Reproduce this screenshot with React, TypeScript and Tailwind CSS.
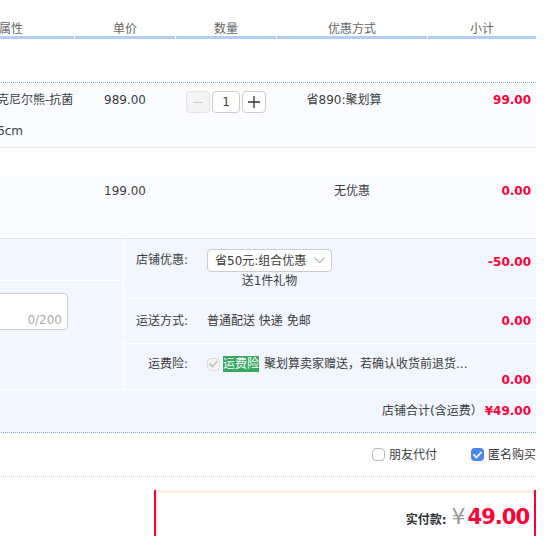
const COLS = 'grid grid-cols-[126px_100px_100px_150px_108px] gap-x-px'
const HEAD = ['属性', '单价', '数量', '优惠方式', '小计']

function CheckMark({ color }: { color: string }) {
  return (
    <svg width="9" height="8" viewBox="0 0 9 8" fill="none">
      <polyline points="1,4 3.5,6.5 8,1.5" stroke={color} strokeWidth="1.8" strokeLinecap="round" strokeLinejoin="round" />
    </svg>
  )
}

export default function App() {
  return (
    <div className="h-[536px] w-[557px] overflow-hidden bg-white text-[12px] leading-[18px] text-[#3c3c3c] font-['DejaVu_Sans','Noto_Sans_CJK_SC',sans-serif]">
      <div className="ml-[-52px] w-[588px]">
        {/* 表头 */}
        <div className={COLS}>
          {HEAD.map((h) => (
            <div key={h} className="h-[39px] border-b-[3px] border-[#b0cefa] pt-[21px] text-center leading-[16px] text-[#666]">
              {h}
            </div>
          ))}
        </div>

        <div className="h-[43px]" />

        {/* 商品 1 */}
        <div className={`${COLS} h-[66px] border-y border-dotted border-t-[#7fb0f2] border-b-[#cfcfcf] bg-[#fbfcff]`}>
          <div className="whitespace-nowrap pl-[49px] pt-[8px]">
            <p>克尼尔熊-抗菌</p>
            <p className="mt-[13px]">6cm</p>
          </div>
          <div className="pt-[8px] text-center">989.00</div>
          <div className="flex justify-center gap-[2px] pt-[8px]">
            <div className="flex h-[22px] w-[24px] items-center justify-center rounded-sm border border-[#e3e3e3] bg-[#f5f5f5]">
              <span className="h-px w-[10px] bg-[#cfcfcf]" />
            </div>
            <div className="flex h-[22px] w-[28px] items-center justify-center rounded-sm border border-[#ccc] bg-white">1</div>
            <div className="relative flex h-[22px] w-[24px] items-center justify-center rounded-sm border border-[#ccc] bg-white">
              <svg width="12" height="12" viewBox="0 0 12 12">
                <path d="M6 0v12M0 6h12" stroke="#333" strokeWidth="1.3" />
              </svg>
            </div>
          </div>
          <div className="pr-[16px] pt-[8px] text-center">省890:聚划算</div>
          <div className="pr-[5px] pt-[8px] text-right font-bold text-[#ff0036]">99.00</div>
        </div>

        {/* 商品 2 */}
        <div className={`${COLS} mt-[27px] h-[64px] border-b border-dotted border-[#cfcfcf] bg-[#fbfcff]`}>
          <div />
          <div className="pt-[7px] text-center">199.00</div>
          <div />
          <div className="pt-[7px] text-center">无优惠</div>
          <div className="pr-[5px] pt-[7px] text-right font-bold text-[#ff0036]">0.00</div>
        </div>

        {/* 店铺 */}
        <div className="border-b border-dotted border-[#7fb0f2] bg-[#f1f6ff]">
          <div className="flex border-b border-white">
            <div className="w-[176px] border-r border-white">
              <div className="h-[42px] border-b border-white" />
              <div className="pt-[12px]">
                <div className="flex h-[37px] w-[120px] items-end justify-end rounded-sm border border-[#ccc] bg-white pb-px pr-[5px] leading-[16px] text-[#aaa]">
                  0/200
                </div>
              </div>
            </div>
            <div className="flex-1">
              <div className="flex h-[60px] items-start border-b border-white pt-[10px]">
                <div className="w-[64px] text-right leading-[23px]">店铺优惠:</div>
                <div className="ml-[19px] flex flex-col items-center">
                  <div className="flex h-[23px] w-[125px] items-center justify-between rounded-sm border border-[#ccc] bg-white pl-[7px] pr-[6px]">
                    <span>省50元:组合优惠</span>
                    <svg width="11" height="7" viewBox="0 0 11 7" fill="none">
                      <polyline points="0.5,0.5 5.5,6 10.5,0.5" stroke="#999" strokeWidth="1" />
                    </svg>
                  </div>
                  <div className="mt-px leading-[16px]">送1件礼物</div>
                </div>
                <div className="ml-auto pr-[5px] pt-[2px] leading-[23px] font-bold text-[#ff0036]">-50.00</div>
              </div>
              <div className="flex h-[45px] items-center border-b border-white">
                <div className="w-[64px] text-right">运送方式:</div>
                <div className="ml-[19px]">普通配送 快递 免邮</div>
                <div className="ml-auto pr-[5px] font-bold text-[#ff0036]">0.00</div>
              </div>
              <div className="h-[45px] pt-[12px] leading-[16px]">
                <div className="flex h-[16px] items-center">
                  <div className="w-[64px] text-right">运费险:</div>
                  <div className="ml-[19px] flex h-[13px] w-[13px] items-center justify-center rounded-sm border border-[#dcdcdc] bg-[#f4f4f4]">
                    <CheckMark color="#c8c8c8" />
                  </div>
                  <span className="ml-[3px] h-[16px] bg-[#35a862] text-white">运费险</span>
                  <span className="ml-[5px] whitespace-nowrap">聚划算卖家赠送，若确认收货前退货...</span>
                </div>
                <div className="pr-[5px] text-right font-bold text-[#ff0036]">0.00</div>
              </div>
            </div>
          </div>
          <div className="flex h-[42px] items-center justify-end pr-[5px]">
            <span>店铺合计(含运费）</span>
            <span className="ml-[2px] font-bold text-[#ff0036]">¥49.00</span>
          </div>
        </div>

        {/* 选项 */}
        <div className="flex h-[44px] items-center justify-end border-b border-dotted border-[#cfcfcf]">
          <div className="flex items-center">
            <span className="h-[13px] w-[13px] rounded-sm border border-[#b9b9b9] bg-white" />
            <span className="ml-[4px]">朋友代付</span>
          </div>
          <div className="ml-[34px] flex items-center">
            <span className="flex h-[13px] w-[13px] items-center justify-center rounded-sm bg-[#4a86f2]">
              <CheckMark color="#fff" />
            </span>
            <span className="ml-[4px]">匿名购买</span>
          </div>
        </div>

        {/* 实付款 */}
        <div className="mt-[13px] flex justify-end">
          <div className="h-[60px] w-[382px] border-x-2 border-[#ff0036]">
            <div className="h-full border-l-2 border-t-[3px] border-[#fdeee4] bg-white">
              <div className="flex items-baseline justify-end pr-[5px] pt-[11px]">
                <span className="font-bold text-[#333]">实付款:</span>
                <span className="ml-[5px] text-[22px] leading-[26px] text-[#999]">¥</span>
                <span className="ml-[2px] text-[21px] leading-[26px] font-bold tracking-[-1px] text-[#ff0036]">49.00</span>
              </div>
            </div>
          </div>
        </div>
      </div>
    </div>
  )
}
